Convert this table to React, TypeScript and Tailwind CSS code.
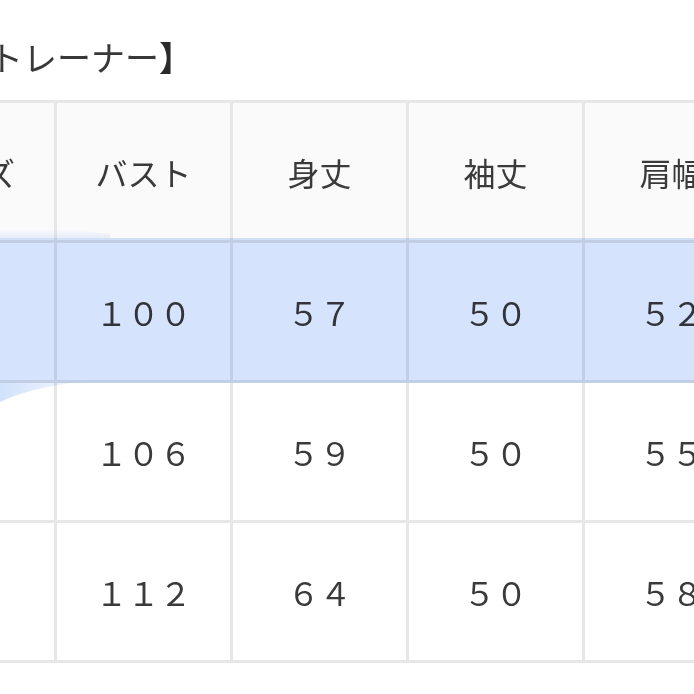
const font = { fontFamily: '"Noto Sans CJK JP", "Noto Sans", sans-serif' };

const header = ["サイズ", "バスト", "身丈", "袖丈", "肩幅"];
const rows = [
  ["Ｓ", "１００", "５７", "５０", "５２"],
  ["Ｍ", "１０６", "５９", "５０", "５５"],
  ["Ｌ", "１１２", "６４", "５０", "５８"],
];

const App: React.FC = () => {
  return (
    <div className="relative w-[694px] h-[694px] overflow-hidden bg-white" style={font}>
      <div className="h-[100px] pt-[14px] flex items-center">
        <div className="ml-[-215px] whitespace-nowrap text-[34px] leading-none text-[#383838]">
          【スウェットトレーナー<span className="text-[#2a2a2a] font-bold">】</span>
        </div>
      </div>

      <div className="ml-[-122px] w-[882px] grid grid-cols-[repeat(5,173px)] gap-[3px] p-[3px] bg-[#e7e7e7]">
        {header.map((h) => (
          <div key={h} className="h-[137px] flex items-center justify-center bg-[#fafafa] text-[32px] text-[#3a3a3a]">
            {h}
          </div>
        ))}
        {rows.map((r) =>
          r.map((v, i) => (
            <div key={r[0] + i} className="h-[137px] flex items-center justify-center bg-white text-[32px] text-[#3a3a3a]">
              {v}
            </div>
          ))
        )}
      </div>

      {/* highlighter mark over the first body row */}
      <div className="absolute left-0 right-0 top-[238px] h-[145px] bg-[#d5e4fc] mix-blend-multiply pointer-events-none" />
      <svg className="absolute left-0 top-[220px] mix-blend-multiply pointer-events-none" width="140" height="200" viewBox="0 0 140 200">
        <defs>
          <linearGradient id="fadeTop" x1="0" y1="0" x2="0" y2="1">
            <stop offset="0" stopColor="#ffffff" />
            <stop offset="1" stopColor="#eaf1fd" />
          </linearGradient>
          <linearGradient id="fadeBottom" x1="0" y1="0" x2="1" y2="0">
            <stop offset="0" stopColor="#d2e2fb" />
            <stop offset="1" stopColor="#eef4fe" />
          </linearGradient>
        </defs>
        <path d="M0 10 Q50 7 110 14 L110 18 L0 18 Z" fill="url(#fadeTop)" />
        <path d="M0 163 L72 163 Q30 168 0 182 Z" fill="url(#fadeBottom)" />
      </svg>
    </div>
  );
};

export default App;
